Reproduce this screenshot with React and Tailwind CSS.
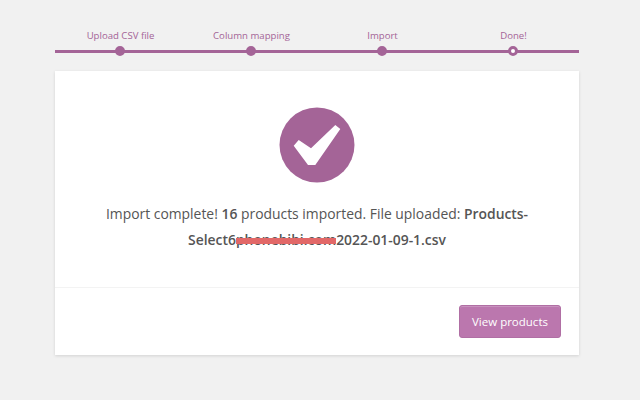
const steps = [
  { label: "Upload CSV file" },
  { label: "Column mapping" },
  { label: "Import" },
  { label: "Done!", current: true },
];

function CheckBadge() {
  return (
    <svg width="76" height="76" viewBox="0 0 76 76" className="block">
      <circle cx="38" cy="38" r="37.500" fill="#a46497" />
      <path d="M14.700 38.700 L19.700 33 L32 41.300 L56.300 18 L61.300 22 L36.300 58 L29 58 Z" fill="#fff" />
    </svg>
  );
}

export default function App() {
  return (
    <div className="w-[640px] h-[400px] bg-[#f1f1f1] pl-[55px] pr-[61px] pt-[28px] font-['Open_Sans',sans-serif]">
      {/* Steps */}
      <ol className="grid grid-cols-4 border-b-[3px] border-[#a46497] h-[25px] -mb-px">
        {steps.map((step) => (
          <li key={step.label} className="relative text-center text-[9.6px] leading-[16px] text-[#a46497] whitespace-nowrap">
            {step.label}
            <span className={`absolute left-1/2 top-[18px] -ml-[5.5px] w-[10px] h-[10px] rounded-full border-[3px] border-[#a46497] ${step.current ? "bg-white" : "bg-[#a46497]"}`} />
          </li>
        ))}
      </ol>

      {/* Card */}
      <div className="mt-[19px] h-[284px] bg-white shadow-[0_1px_3px_rgba(0,0,0,0.13)] flex flex-col">
        <div className="h-[217px] flex flex-col items-center pt-[36px] border-b border-[#f3f3f3]">
          <CheckBadge />
          <p className="mt-[18px] w-[440px] text-center text-[13.9px] leading-[26px] text-[#555]">
            Import complete! <strong className="font-semibold">16</strong> products imported. File uploaded:{" "}
            <strong className="font-semibold">
              Products-Select6
              <span className="relative">
                phonebibi.com
                <span className="absolute left-0 right-0 top-[8px] h-[6px] bg-[#e26868]" />
              </span>
              2022-01-09-1.csv
            </strong>
          </p>
        </div>
        <div className="flex-1 flex justify-end items-start pt-[17px] pr-[18px]">
          <button className="w-[102px] h-[33px] rounded-[3px] bg-[#bb77ae] border border-[#b06fa4] text-white text-[11.5px] shadow-[inset_0_1px_0_rgba(255,255,255,0.2)]">
            View products
          </button>
        </div>
      </div>
    </div>
  );
}
